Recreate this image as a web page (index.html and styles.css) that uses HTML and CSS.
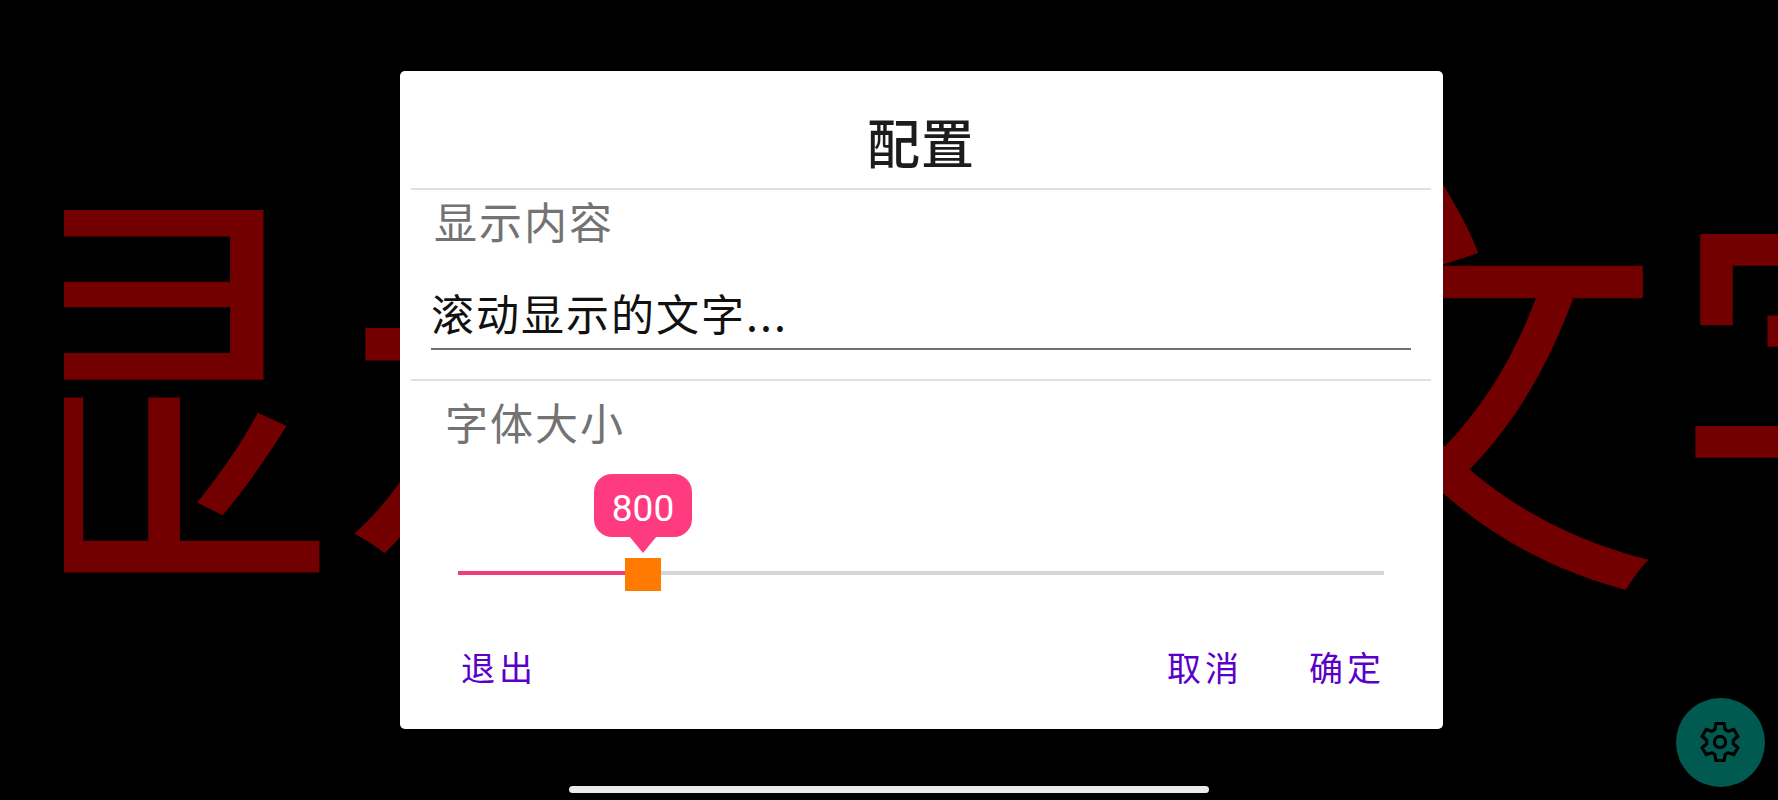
FILE: index.html
```html
<!DOCTYPE html>
<html lang="zh-CN">
<head>
    <meta charset="UTF-8">
    <meta name="viewport" content="width=device-width, initial-scale=1.0">
    <title>滚动显示</title>
    <link rel="stylesheet" href="styles.css">
</head>
<body>
    <div class="marquee">
        <div class="marquee-text">显示的文字</div>
    </div>

    <div class="dialog">
        <h1 class="dialog-title">配置</h1>
        <div class="section section-text">
            <label class="label" for="content">显示内容</label>
            <input class="text-input" type="text" id="content" value="滚动显示的文字...">
        </div>
        <div class="section section-size">
            <div class="label">字体大小</div>
            <div class="slider">
                <div class="slider-fill"></div>
                <div class="slider-thumb">
                    <div class="bubble">800</div>
                </div>
            </div>
        </div>
        <div class="actions">
            <button class="btn btn-exit">退出</button>
            <button class="btn">取消</button>
            <button class="btn">确定</button>
        </div>
    </div>

    <button class="fab" aria-label="设置">
        <svg width="44" height="44" viewBox="-22 -22 44 44" fill="none" stroke="#000" stroke-width="3.2">
            <path d="M-5.2-12.4L-4-18.5H4L5.2-12.4L8.1-10.7L13.8-12.6L17.8-5.7L13.3-1.7V1.7L17.8 5.7L13.8 12.6L8.1 10.7L5.2 12.4L4 18.5H-4L-5.2 12.4L-8.1 10.7L-13.8 12.6L-17.8 5.7L-13.3 1.7V-1.7L-17.8-5.7L-13.8-12.6L-8.1-10.7Z"/>
            <circle r="5.6"/>
        </svg>
    </button>
    <div class="home-bar"></div>
</body>
</html>
```
FILE: styles.css
```css
* {
    box-sizing: border-box;
}

body {
    margin: 0;
    height: 800px;
    overflow: hidden;
    position: relative;
    background-color: #000;
    font-family: "Noto Sans CJK SC", sans-serif;
    padding-top: 71px;
}

.marquee {
    position: absolute;
    top: 0;
    left: 64px;
    right: 0;
    height: 800px;
    overflow: hidden;
}

.marquee-text {
    margin-left: -167px;
    font-size: 440px;
    letter-spacing: 2px;
    line-height: 734px;
    white-space: nowrap;
    color: #720000;
}

.dialog {
    position: relative;
    width: 1043px;
    height: 658px;
    margin-left: 400px;
    padding: 0 12px 0 11px;
    background-color: #fff;
    border-radius: 5px;
    display: flex;
    flex-direction: column;
}

.dialog-title {
    margin: 0;
    height: 117px;
    padding-top: 33px;
    font-size: 53px;
    line-height: 74px;
    letter-spacing: 1px;
    font-weight: 500;
    text-align: center;
    color: #1c1c1c;
}

.section {
    border-top: 2px solid #e0e0e0;
}

.section-text {
    height: 191px;
    padding: 0 20px;
}

.label {
    display: block;
    height: 64px;
    font-size: 43px;
    line-height: 60px;
    letter-spacing: 2px;
    color: #737373;
}

.section-text .label {
    padding-left: 3px;
}

.text-input {
    display: block;
    width: 980px;
    height: 96px;
    padding: 22px 0 0;
    border: none;
    border-bottom: 2px solid #6f6f6f;
    outline: none;
    background: none;
    font-family: inherit;
    font-size: 43px;
    letter-spacing: 2px;
    color: #111;
}

.section-size {
    height: 233px;
    padding: 10px 47px 0;
}

.section-size .label {
    margin-left: -13px;
}

.slider {
    position: relative;
    width: 926px;
    height: 4px;
    margin-top: 116px;
    background-color: #d6d6d6;
}

.slider-fill {
    width: 18%;
    height: 4px;
    background-color: #f03c7e;
}

.slider-thumb {
    position: absolute;
    left: 167px;
    top: -13px;
    width: 36px;
    height: 33px;
    background-color: #ff7a00;
}

.bubble {
    position: absolute;
    left: -31px;
    bottom: 54px;
    width: 98px;
    height: 63px;
    border-radius: 18px;
    background-color: #ff3b80;
    color: #fff;
    font-family: Roboto, sans-serif;
    font-size: 37px;
    line-height: 69px;
    text-align: center;
}

.bubble::after {
    content: "";
    position: absolute;
    top: 62px;
    left: 35px;
    border: 14px solid transparent;
    border-top: 17px solid #ff3b80;
    border-bottom: 0;
}

.actions {
    display: flex;
    gap: 66px;
    padding: 30px 46px 0 50px;
}

.btn {
    padding: 0;
    border: none;
    background: none;
    font-family: inherit;
    font-size: 34px;
    line-height: 50px;
    letter-spacing: 4px;
    color: #5a00c8;
}

.btn-exit {
    margin-right: auto;
}

.fab {
    position: absolute;
    left: 1676px;
    top: 698px;
    width: 89px;
    height: 89px;
    padding: 0 1px 1px 0;
    border: none;
    border-radius: 50%;
    background-color: #015a50;
    display: flex;
    align-items: center;
    justify-content: center;
}

.home-bar {
    position: absolute;
    left: 569px;
    top: 786px;
    width: 640px;
    height: 7px;
    border-radius: 4px;
    background-color: #ebebeb;
}
```
